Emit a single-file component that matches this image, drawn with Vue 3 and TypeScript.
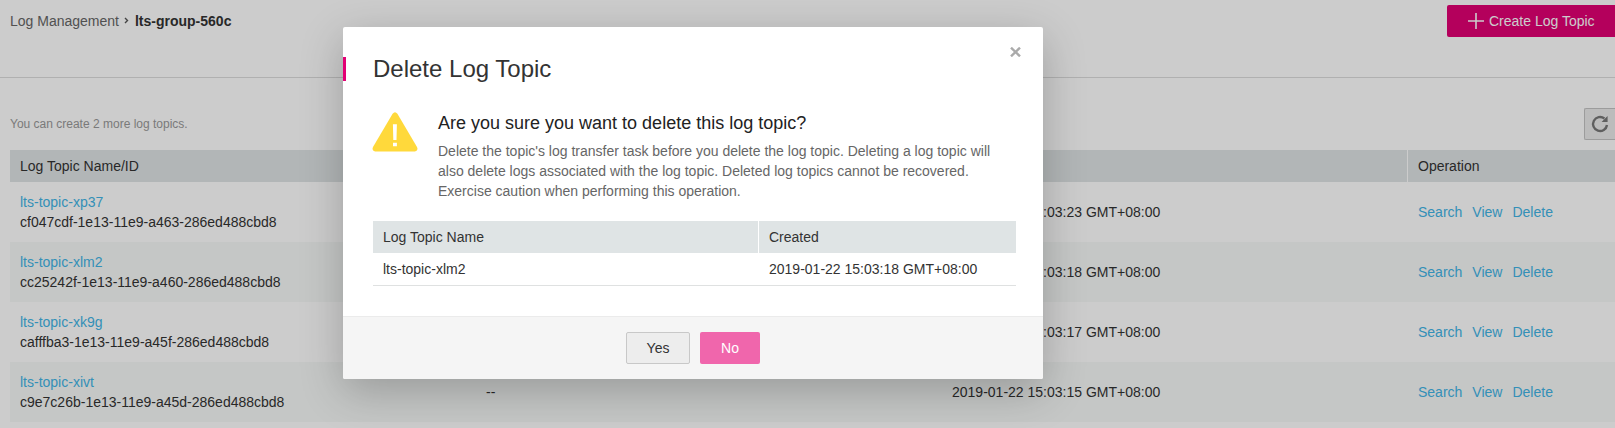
<script setup lang="ts">
interface Topic {
  name: string
  id: string
  created: string
}

const topics: Topic[] = [
  { name: 'lts-topic-xp37', id: 'cf047cdf-1e13-11e9-a463-286ed488cbd8', created: '2019-01-22 15:03:23 GMT+08:00' },
  { name: 'lts-topic-xlm2', id: 'cc25242f-1e13-11e9-a460-286ed488cbd8', created: '2019-01-22 15:03:18 GMT+08:00' },
  { name: 'lts-topic-xk9g', id: 'cafffba3-1e13-11e9-a45f-286ed488cbd8', created: '2019-01-22 15:03:17 GMT+08:00' },
  { name: 'lts-topic-xivt', id: 'c9e7c26b-1e13-11e9-a45d-286ed488cbd8', created: '2019-01-22 15:03:15 GMT+08:00' },
]
const selected = topics[1]
const actions = ['Search', 'View', 'Delete']
</script>

<template>
  <div class="page">
    <header class="topbar">
      <nav class="crumbs">
        <span>Log Management</span>
        <svg class="chevron" width="5" height="7" viewBox="0 0 5 7"><path d="M1 1l2.5 2.5L1 6" /></svg>
        <strong>lts-group-560c</strong>
      </nav>
      <button class="create">
        <svg width="16" height="16" viewBox="0 0 16 16"><path d="M8 0v16M0 8h16" /></svg>
        <span>Create Log Topic</span>
      </button>
    </header>

    <div class="toolbar">
      <span class="quota">You can create 2 more log topics.</span>
      <button class="refresh" aria-label="Refresh">
        <svg width="18" height="18" viewBox="0 0 18 18">
          <path class="arc" d="M16 10A7 7 0 1 1 13.4 3.5" />
          <path class="tip" d="M16.6 1v6h-6l1.9-2L14 3.4z" />
        </svg>
      </button>
    </div>

    <div class="grid head">
      <div>Log Topic Name/ID</div>
      <div></div>
      <div></div>
      <div>Operation</div>
    </div>
    <div v-for="(t, i) in topics" :key="t.id" class="grid row" :class="{ striped: i % 2 === 1 }">
      <div><a>{{ t.name }}</a><br />{{ t.id }}</div>
      <div>--</div>
      <div>{{ t.created }}</div>
      <div class="actions"><a v-for="a in actions" :key="a">{{ a }}</a></div>
    </div>

    <div class="overlay">
      <section class="dialog" role="dialog">
        <div class="title">
          <h1>Delete Log Topic</h1>
          <svg class="close" width="11" height="10" viewBox="0 0 11 10"><path d="M1 .7l9 8.6M10 .7L1 9.3" /></svg>
        </div>
        <div class="message">
          <svg class="warn" width="46" height="40" viewBox="0 0 46 40">
            <path class="tri" d="M20.6 1.8Q23-1.4 25.4 1.8L45 35Q46.6 39 43 39.4H3Q-.6 39 1 35z" />
            <path class="mark" d="M20.9 12.3h4l-.4 15.8h-3.2zM21 30.7h3.9v3.6H21z" />
          </svg>
          <div>
            <h2>Are you sure you want to delete this log topic?</h2>
            <p>Delete the topic's log transfer task before you delete the log topic. Deleting a log topic will<br />also delete logs associated with the log topic. Deleted log topics cannot be recovered.<br />Exercise caution when performing this operation.</p>
          </div>
        </div>
        <div class="summary">
          <div class="srow shead"><div>Log Topic Name</div><div>Created</div></div>
          <div class="srow"><div>{{ selected.name }}</div><div>{{ selected.created }}</div></div>
        </div>
        <footer>
          <button class="yes">Yes</button>
          <button class="no">No</button>
        </footer>
      </section>
    </div>
  </div>
</template>

<style>
body {
  overflow: hidden;
}
</style>

<style scoped>
.page {
  position: relative;
  width: 1615px;
  height: 428px;
  overflow: hidden;
  box-sizing: border-box;
  background: #fff;
  color: #333;
  font: 14px/20px "Liberation Sans", Arial, sans-serif;
}
.page * {
  box-sizing: border-box;
}
button {
  font: inherit;
  padding: 0;
  margin: 0;
}
a {
  color: #42b4e6;
}
.topbar {
  display: flex;
  justify-content: space-between;
  height: 78px;
  padding: 5px 0 0 10px;
  border-bottom: 1px solid #dcdcdc;
}
.crumbs {
  display: flex;
  align-items: center;
  height: 32px;
  color: #666;
}
.crumbs strong {
  color: #333;
}
.chevron {
  margin: 0 6px 1px 5px;
  fill: none;
  stroke: #555;
  stroke-width: 1.4;
}
.create {
  display: flex;
  align-items: center;
  gap: 5px;
  width: 168px;
  height: 32px;
  padding-left: 21px;
  border: 0;
  border-radius: 2px 0 0 2px;
  background: #e20074;
  color: #fff;
}
.create svg {
  stroke: #fff;
  stroke-width: 1.6;
}
.toolbar {
  display: flex;
  justify-content: space-between;
  align-items: center;
  height: 32px;
  margin: 30px 0 10px 10px;
}
.quota {
  color: #999;
  font-size: 12px;
}
.refresh {
  display: flex;
  align-items: center;
  width: 31px;
  height: 32px;
  padding-left: 6px;
  border: 1px solid #c4c4c4;
  border-right: 0;
  border-radius: 2px 0 0 2px;
  background: #ececec;
}
.arc {
  fill: none;
  stroke: #777;
  stroke-width: 2.4;
}
.tip {
  fill: #777;
}
.grid {
  display: grid;
  grid-template-columns: 466px 466px 465px 208px;
  margin-left: 10px;
}
.grid > div {
  padding: 0 10px;
}
.head {
  height: 32px;
  line-height: 32px;
  background: #dfe4e5;
}
.head > div + div {
  border-left: 1px solid #fff;
}
.row {
  height: 60px;
  align-items: center;
}
.row.striped {
  background: #f7f9f8;
}
.grid > .actions {
  display: flex;
  gap: 10px;
  padding-left: 11px;
}
.overlay {
  position: absolute;
  inset: 0;
  padding: 27px 0 0 343px;
  background: rgba(0, 0, 0, 0.2);
}
.dialog {
  width: 700px;
  height: 352px;
  border-radius: 2px;
  background: #fff;
  box-shadow: 0 12px 44px rgba(0, 0, 0, 0.23);
  overflow: hidden;
}
.title {
  display: flex;
  justify-content: space-between;
  height: 86px;
  padding: 20px 22px 0 0;
}
h1 {
  height: 24px;
  margin: 10px 0 0;
  padding-left: 27px;
  border-left: 3px solid #e20074;
  font-size: 24px;
  font-weight: 400;
  line-height: 24px;
}
.close {
  stroke: #aaa;
  stroke-width: 2.4;
}
.message {
  display: flex;
  gap: 20px;
  height: 108px;
  padding-left: 29px;
}
.warn {
  flex: none;
  margin-top: -1px;
}
.tri {
  fill: #ffd93b;
}
.mark {
  fill: #fff;
}
h2 {
  margin: 0;
  color: #222;
  font-size: 18px;
  font-weight: 400;
  line-height: 20px;
}
p {
  margin: 8px 0 0;
  color: #666;
  white-space: nowrap;
}
.summary {
  width: 643px;
  margin: 0 0 30px 30px;
  border-bottom: 1px solid #dfe1e1;
}
.srow {
  display: grid;
  grid-template-columns: 385px 258px;
  line-height: 32px;
}
.srow > div {
  padding-left: 10px;
  border-left: 1px solid transparent;
}
.srow > div:first-child {
  border-left: 0;
}
.shead {
  background: #dfe4e5;
}
.shead > div + div {
  border-left-color: #fff;
}
footer {
  display: flex;
  justify-content: center;
  gap: 10px;
  height: 63px;
  padding: 15px 0 0;
  border-top: 1px solid #ebebeb;
  background: #f5f5f5;
}
.yes,
.no {
  height: 32px;
  border-radius: 2px;
}
.yes {
  width: 64px;
  border: 1px solid #c8c8c8;
  background: #ededed;
  color: #333;
}
.no {
  width: 60px;
  border: 0;
  background: #f066ac;
  color: #fff;
}
</style>
